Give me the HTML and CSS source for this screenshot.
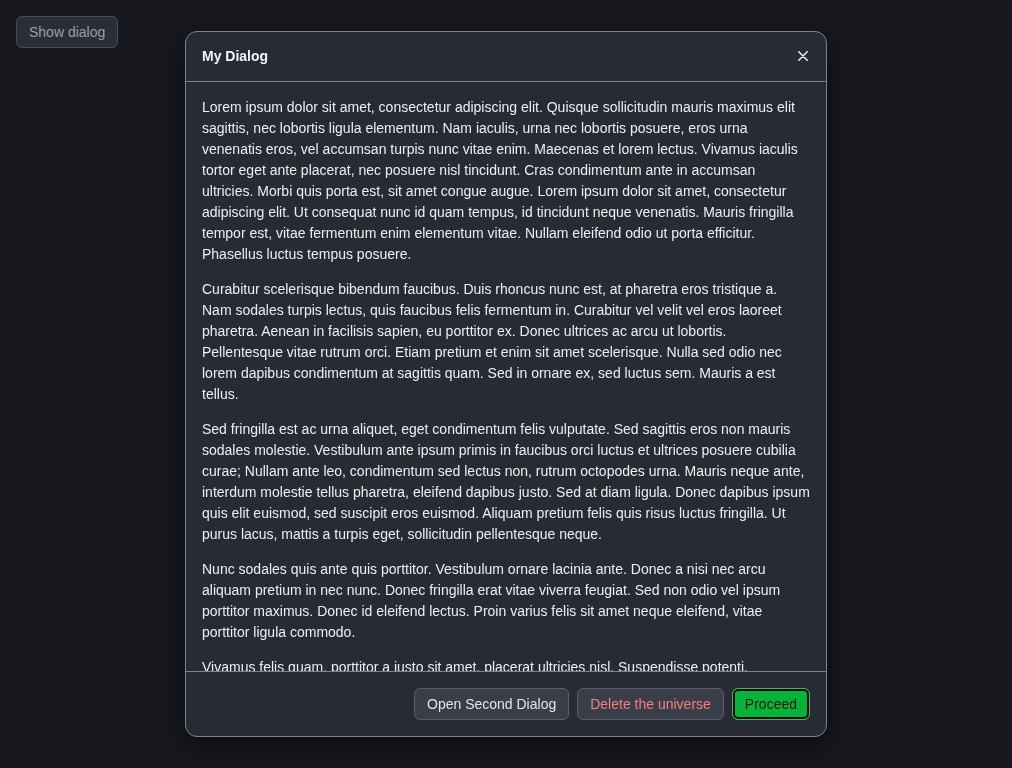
FILE: index.html
```html
<!DOCTYPE html>
<html lang="en">
<head>
<meta charset="utf-8">
<title>Dialog</title>
<link rel="stylesheet" href="styles.css">
</head>
<body>
<button class="btn show-btn" type="button">Show dialog</button>
<div class="dialog" role="dialog" aria-labelledby="dlg-title">
  <header class="dialog-header">
    <h2 id="dlg-title" class="dialog-title">My Dialog</h2>
    <button class="close-btn" type="button" aria-label="Close">
      <svg width="10" height="10" viewBox="0 0 10 10" aria-hidden="true"><path d="M0.8 0.8 L9.2 9.2 M9.2 0.8 L0.8 9.2" stroke="currentColor" stroke-width="1.6" stroke-linecap="round"/></svg>
    </button>
  </header>
  <div class="dialog-body">
    <p>Lorem ipsum dolor sit amet, consectetur adipiscing elit. Quisque sollicitudin mauris maximus elit sagittis, nec lobortis ligula elementum. Nam iaculis, urna nec lobortis posuere, eros urna venenatis eros, vel accumsan turpis nunc vitae enim. Maecenas et lorem lectus. Vivamus iaculis tortor eget ante placerat, nec posuere nisl tincidunt. Cras condimentum ante in accumsan ultricies. Morbi quis porta est, sit amet congue augue. Lorem ipsum dolor sit amet, consectetur adipiscing elit. Ut consequat nunc id quam tempus, id tincidunt neque venenatis. Mauris fringilla tempor est, vitae fermentum enim elementum vitae. Nullam eleifend odio ut porta efficitur. Phasellus luctus tempus posuere.</p>
    <p>Curabitur scelerisque bibendum faucibus. Duis rhoncus nunc est, at pharetra eros tristique a. Nam sodales turpis lectus, quis faucibus felis fermentum in. Curabitur vel velit vel eros laoreet pharetra. Aenean in facilisis sapien, eu porttitor ex. Donec ultrices ac arcu ut lobortis. Pellentesque vitae rutrum orci. Etiam pretium et enim sit amet scelerisque. Nulla sed odio nec lorem dapibus condimentum at sagittis quam. Sed in ornare ex, sed luctus sem. Mauris a est tellus.</p>
    <p>Sed fringilla est ac urna aliquet, eget condimentum felis vulputate. Sed sagittis eros non mauris sodales molestie. Vestibulum ante ipsum primis in faucibus orci luctus et ultrices posuere cubilia curae; Nullam ante leo, condimentum sed lectus non, rutrum octopodes urna. Mauris neque ante, interdum molestie tellus pharetra, eleifend dapibus justo. Sed at diam ligula. Donec dapibus ipsum quis elit euismod, sed suscipit eros euismod. Aliquam pretium felis quis risus luctus fringilla. Ut purus lacus, mattis a turpis eget, sollicitudin pellentesque neque.</p>
    <p>Nunc sodales quis ante quis porttitor. Vestibulum ornare lacinia ante. Donec a nisi nec arcu aliquam pretium in nec nunc. Donec fringilla erat vitae viverra feugiat. Sed non odio vel ipsum porttitor maximus. Donec id eleifend lectus. Proin varius felis sit amet neque eleifend, vitae porttitor ligula commodo.</p>
    <p>Vivamus felis quam, porttitor a justo sit amet, placerat ultricies nisl. Suspendisse potenti. Pellentesque habitant morbi tristique senectus et netus et malesuada fames ac turpis egestas. Integer euismod, lorem nec tincidunt posuere, justo nibh luctus nunc, at fermentum nisl lectus at massa.</p>
  </div>
  <footer class="dialog-footer">
    <button class="btn" type="button">Open Second Dialog</button>
    <button class="btn btn-danger" type="button">Delete the universe</button>
    <button class="btn btn-primary" type="button">Proceed</button>
  </footer>
</div>
</body>
</html>
```
FILE: styles.css
```css
* { box-sizing: border-box; }

html, body {
  margin: 0;
  height: 100%;
}

body {
  background: #16181d;
  font-family: "Liberation Sans", Arial, sans-serif;
  font-size: 14px;
  line-height: 21px;
  color: #e8e9ec;
  padding: 16px;
}

.btn {
  display: inline-flex;
  align-items: center;
  justify-content: center;
  font-family: inherit;
  font-size: 14px;
  line-height: 20px;
  height: 32px;
  padding: 0 12px;
  border: 1px solid #5a5f6b;
  border-radius: 6px;
  background: #3a3e49;
  color: #e2e4e8;
}

.show-btn {
  background: #2b2e37;
  border-color: #494d58;
  color: #9a9ea7;
}

.dialog {
  position: fixed;
  left: 185px;
  top: 31px;
  width: 642px;
  height: 706px;
  display: flex;
  flex-direction: column;
  background: #282b34;
  border: 1px solid #7e8390;
  border-radius: 12px;
  box-shadow: 0 8px 24px rgba(0, 0, 0, 0.45);
  overflow: hidden;
}

.dialog-header {
  display: flex;
  align-items: center;
  justify-content: space-between;
  height: 50px;
  padding: 0 16px 2px;
  border-bottom: 1px solid #7e8390;
  flex: none;
}

.dialog-title {
  margin: 0;
  font-size: 14px;
  line-height: 20px;
  font-weight: 700;
  color: #f2f3f5;
}

.close-btn {
  display: flex;
  align-items: center;
  justify-content: center;
  width: 15px;
  height: 14px;
  padding: 0;
  border: 0;
  background: transparent;
  color: #e8e9ec;
}

.dialog-body {
  flex: 1;
  overflow-y: auto;
  scrollbar-width: none;
  padding: 15px 16px;
  color: #eceef1;
}

.dialog-body p {
  margin: 0 0 14px;
}

.dialog-footer {
  display: flex;
  justify-content: flex-end;
  align-items: center;
  gap: 8px;
  padding: 16px;
  border-top: 1px solid #7e8390;
  flex: none;
}

.btn-danger {
  color: #f47f7f;
}

.btn-primary {
  background: #08b33a;
  color: #0c1a10;
  border: 1px solid #2ec24f;
  box-shadow: inset 0 0 0 2px #000;
  padding: 0 12px;
}
```
